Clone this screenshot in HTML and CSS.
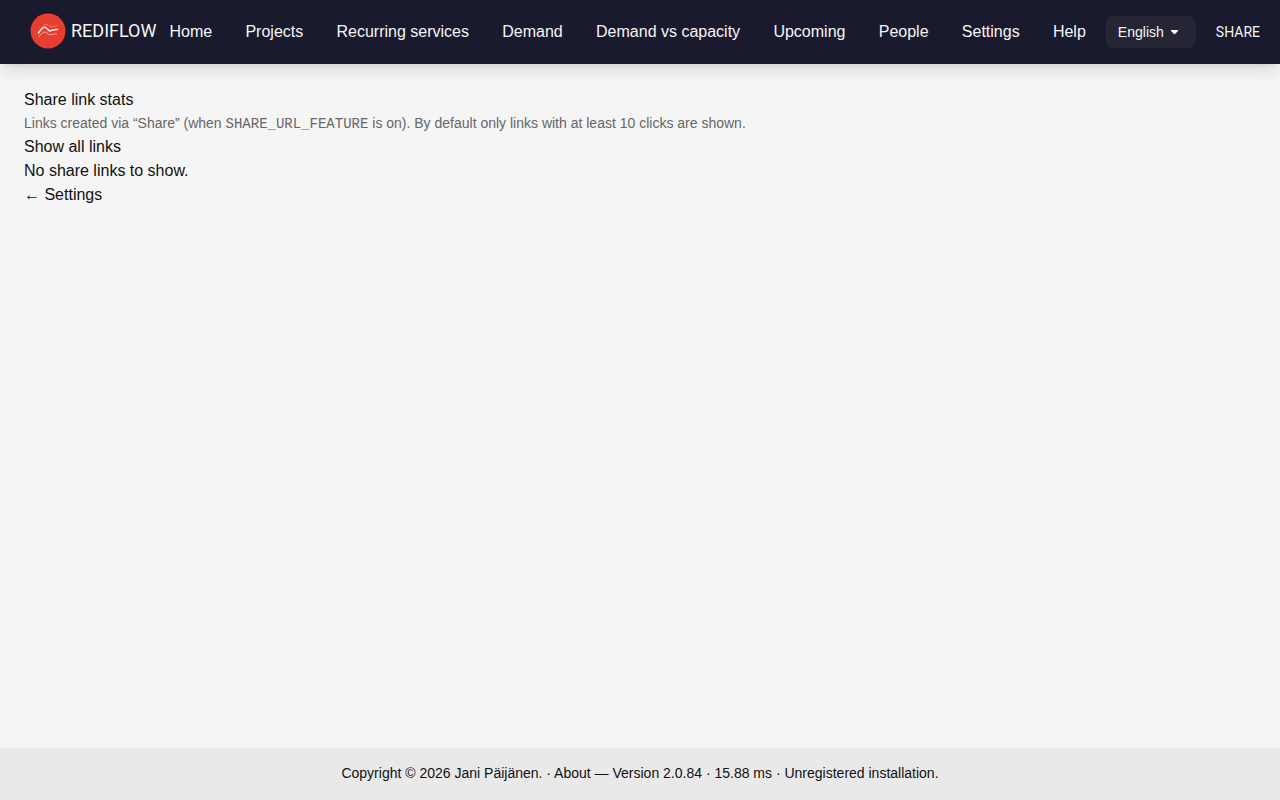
FILE: index.html
```html
<!DOCTYPE html>
<html lang="en">
<head>
    <meta charset="UTF-8" />
    <meta name="viewport" content="width=device-width, initial-scale=1.0" />
    <title>Share link stats - Rediflow</title>
    <link rel="stylesheet" href="styles.css">
</head>
<body>
    <header class="navbar">
        <a class="brand" href="/">
            <svg class="brand-logo" viewBox="0 0 36 36" aria-hidden="true">
                <circle cx="18" cy="18" r="17.5" fill="#e83e30" />
                <g fill="none" stroke="#fff" stroke-linecap="round" stroke-linejoin="round">
                    <path d="M13 13C15 11 17.500 11.300 19.500 12.800c2.500 1.400 5 .7 7.500-.3" stroke-width="1" opacity="0.3" />
                    <path d="M8.500 20C11 16 12.500 14 15 14.200c2.500.3 3 4.300 5.500 3.600 2-.5 4-1.500 7-1.300" stroke-width="1.600" opacity="0.9" />
                    <path d="M9 23.500c2.500-2.500 4-5 6.500-4.300 2 .6 3 3 5.500 2.600 2-.5 3.500-1.200 5.500-.8" stroke-width="1" opacity="0.6" />
                </g>
            </svg>
            <span>REDIFLOW</span>
        </a>
        <nav class="menu">
            <a href="/">Home</a>
            <a href="/projects">Projects</a>
            <a href="/recurring">Recurring services</a>
            <a href="/demand">Demand</a>
            <a href="/capacity">Demand vs capacity</a>
            <a href="/upcoming">Upcoming</a>
            <a href="/people">People</a>
            <a href="/settings">Settings</a>
            <a href="/help">Help</a>
        </nav>
        <select class="language" aria-label="Language">
            <option selected>English</option>
            <option>Suomi</option>
        </select>
        <button class="share" type="button">SHARE</button>
    </header>

    <main class="content">
        <h1>Share link stats</h1>
        <p class="hint">Links created via “Share” (when <code>SHARE_URL_FEATURE</code> is on). By default only links with at least 10 clicks are shown.</p>
        <p><a href="?all=1">Show all links</a></p>
        <p>No share links to show.</p>
        <p><a href="/settings">← Settings</a></p>
    </main>

    <footer class="footer">
        Copyright © 2026 Jani Päijänen. · <a href="/about">About</a> — Version 2.0.84 · 15.88 ms · Unregistered installation.
    </footer>
</body>
</html>
```

FILE: styles.css
```css
* {
    box-sizing: border-box;
}
body {
    display: flex;
    flex-direction: column;
    min-height: 100vh;
    margin: 0;
    background: #f5f5f5;
    color: #111;
    font-family: "Liberation Sans", Arial, sans-serif;
    font-size: 16px;
    line-height: 24px;
}
a {
    color: inherit;
    text-decoration: none;
}
h1,
p {
    margin: 0;
    font-size: 16px;
    font-weight: normal;
}
.navbar {
    display: flex;
    align-items: center;
    min-height: 64px;
    padding: 0 20px 0 30px;
    background: #1a1a2e;
    color: #f5f5f5;
    box-shadow: 0 10px 15px -3px rgba(0, 0, 0, 0.1), 0 4px 6px -4px rgba(0, 0, 0, 0.1);
}
.brand {
    display: flex;
    align-items: center;
    gap: 5px;
    padding-bottom: 2px;
    font-family: Roboto, sans-serif;
    font-size: 18px;
}
.brand-logo {
    width: 36px;
    height: 36px;
}
.menu {
    display: flex;
    flex: 1;
    justify-content: space-between;
    margin: 0 20px 0 13px;
    white-space: nowrap;
}
.language {
    appearance: none;
    width: 90px;
    height: 32px;
    padding: 0 12px;
    border: 0;
    border-radius: 8px;
    background: #252535 url('data:image/svg+xml,<svg xmlns="http://www.w3.org/2000/svg" width="7" height="4"><path d="M0 0h7v1L4 4H3L0 1z" fill="%23fff"/></svg>') no-repeat right 18px center;
    color: #f5f5f5;
    font-family: inherit;
    font-size: 14px;
}
.share {
    margin-left: 20px;
    padding: 0;
    border: 0;
    background: none;
    color: #f5f5f5;
    font-family: Roboto, sans-serif;
    font-size: 14px;
    cursor: pointer;
}
.content {
    flex: 1;
    padding: 24px;
}
.hint {
    color: #666;
    font-size: 14px;
    line-height: 22px;
}
.hint code {
    font-family: "Liberation Mono", monospace;
    font-size: 14px;
}
.footer {
    padding: 13px 24px 15px;
    background: #e9e9e9;
    font-size: 14px;
    text-align: center;
}
```
